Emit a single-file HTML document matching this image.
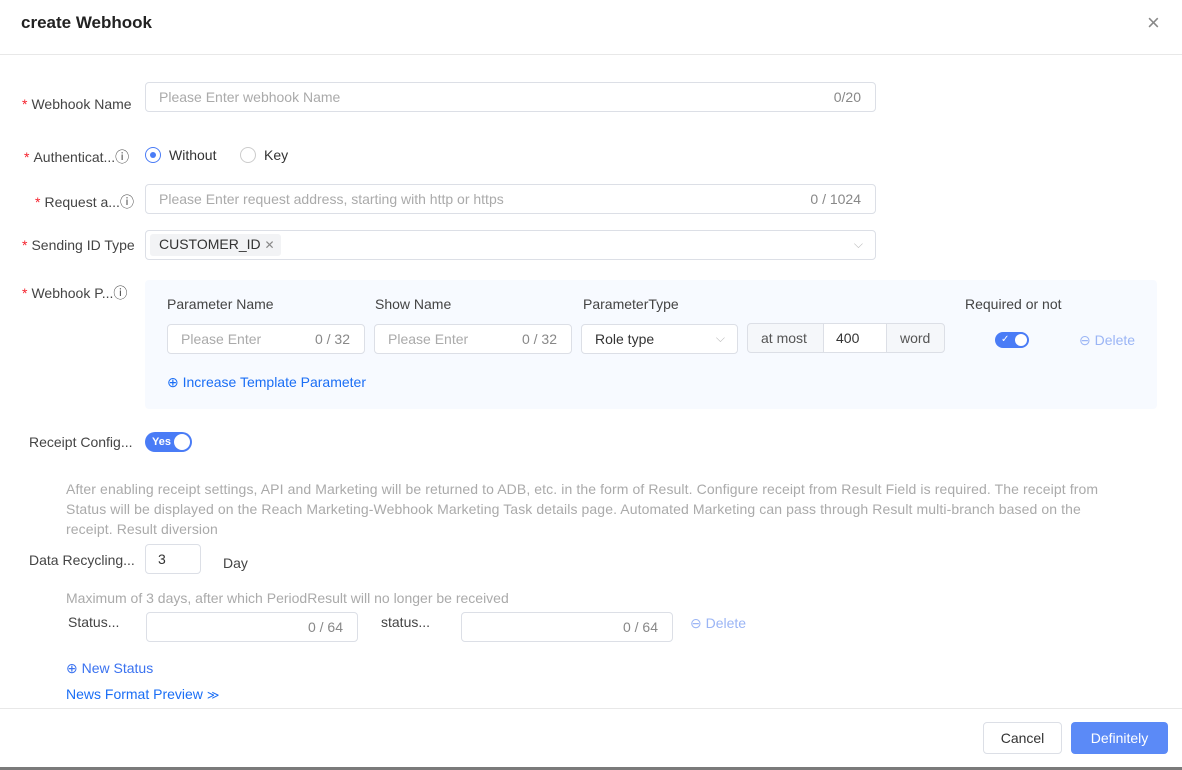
<!DOCTYPE html>
<html><head><meta charset="utf-8"><style>
*{box-sizing:border-box;margin:0;padding:0}
body{width:1182px;height:770px;background:#fff;font-family:"Liberation Sans",sans-serif;font-size:14px;color:#333;position:relative;overflow:hidden}
.a{position:absolute;white-space:nowrap}
.lbl{color:#444;font-size:14px}
.req{color:#f5222d;margin-right:4px}
.inp{position:absolute;border:1px solid #dcdfe6;border-radius:4px;background:#fff;height:30px}
.ph{position:absolute;color:#aaa;top:6px;font-size:14px;white-space:nowrap}
.cnt{position:absolute;right:14px;top:6px;color:#888;font-size:14px}
.blue{color:#1a6ef5}
.lb{color:#9bb5f5}
.gray{color:#aaa}
</style></head><body>
<div class="a" style="left:21px;top:13px;font-size:17px;font-weight:bold;color:#222">create Webhook</div>
<div class="a" style="left:1147px;top:10px;font-size:22px;color:#888">×</div>
<div class="a" style="left:0;top:54px;width:1182px;height:1px;background:#e8e8e8"></div>

<div class="a lbl" style="left:22px;top:96px"><span class="req">*</span>Webhook Name</div>
<div class="inp" style="left:145px;top:82px;width:731px"><span class="ph" style="left:13px">Please Enter webhook Name</span><span class="cnt">0/20</span></div>

<div class="a lbl" style="left:24px;top:147px"><span class="req">*</span>Authenticat...ⓘ</div>
<div class="a" style="left:145px;top:147px;width:16px;height:16px;border:1px solid #4a7cf6;border-radius:50%"><div style="position:absolute;left:4px;top:4px;width:6px;height:6px;border-radius:50%;background:#4a7cf6"></div></div>
<div class="a" style="left:169px;top:147px">Without</div>
<div class="a" style="left:240px;top:147px;width:16px;height:16px;border:1px solid #ccc;border-radius:50%"></div>
<div class="a" style="left:264px;top:147px">Key</div>

<div class="a lbl" style="left:35px;top:192px"><span class="req">*</span>Request a...ⓘ</div>
<div class="inp" style="left:145px;top:184px;width:731px"><span class="ph" style="left:13px">Please Enter request address, starting with http or https</span><span class="cnt">0 / 1024</span></div>

<div class="a lbl" style="left:22px;top:237px"><span class="req">*</span>Sending ID Type</div>
<div class="inp" style="left:145px;top:230px;width:731px"><div class="a" style="left:4px;top:3px;height:22px;background:#f2f3f5;border-radius:3px;padding:2px 6px 0 9px;color:#333">CUSTOMER_ID <span style="color:#888;font-size:12px">✕</span></div><span class="a" style="right:12px;top:6px;color:#bbb;font-size:12px">⌵</span></div>

<div class="a lbl" style="left:22px;top:283px"><span class="req">*</span>Webhook P...ⓘ</div>
<div class="a" style="left:145px;top:280px;width:1012px;height:129px;background:#f7faff;border-radius:4px"></div>
<div class="a lbl" style="left:167px;top:296px">Parameter Name</div>
<div class="a lbl" style="left:375px;top:296px">Show Name</div>
<div class="a lbl" style="left:583px;top:296px">ParameterType</div>
<div class="a lbl" style="left:965px;top:296px">Required or not</div>
<div class="inp" style="left:167px;top:324px;width:198px"><span class="ph" style="left:13px">Please Enter</span><span class="cnt">0 / 32</span></div>
<div class="inp" style="left:374px;top:324px;width:198px"><span class="ph" style="left:13px">Please Enter</span><span class="cnt">0 / 32</span></div>
<div class="inp" style="left:581px;top:324px;width:157px"><span class="a" style="left:13px;top:6px;color:#333">Role type</span><span class="a" style="right:12px;top:6px;color:#bbb;font-size:12px">⌵</span></div>
<div class="inp" style="left:747px;top:323px;width:198px;background:#f5f7fa;overflow:hidden"><span class="a" style="left:13px;top:6px;color:#555">at most</span><div class="a" style="left:75px;top:0;width:64px;height:30px;background:#fff;border-left:1px solid #dcdfe6;border-right:1px solid #dcdfe6"><span class="a" style="left:12px;top:6px;color:#333">400</span></div><span class="a" style="left:152px;top:6px;color:#555">word</span></div>
<div class="a" style="left:995px;top:332px;width:34px;height:16px;border-radius:8px;background:#4a7cf6"><span class="a" style="left:6px;top:1px;color:#fff;font-size:10px;line-height:14px">✓</span><div class="a" style="right:2px;top:2px;width:12px;height:12px;border-radius:50%;background:#fff"></div></div>
<div class="a lb" style="left:1079px;top:332px">⊖ Delete</div>
<div class="a blue" style="left:167px;top:374px">⊕ Increase Template Parameter</div>

<div class="a lbl" style="left:29px;top:434px">Receipt Config...</div>
<div class="a" style="left:145px;top:432px;width:47px;height:20px;border-radius:10px;background:#4a7cf6"><span class="a" style="left:7px;top:0;color:#fff;font-size:11px;font-weight:bold;line-height:20px">Yes</span><div class="a" style="right:2px;top:2px;width:16px;height:16px;border-radius:50%;background:#fff"></div></div>
<div class="a gray" style="left:66px;top:479px;line-height:20px;font-size:14px;letter-spacing:0.1px">After enabling receipt settings, API and Marketing will be returned to ADB, etc. in the form of Result. Configure receipt from Result Field is required. The receipt from<br>Status will be displayed on the Reach Marketing-Webhook Marketing Task details page. Automated Marketing can pass through Result multi-branch based on the<br>receipt. Result diversion</div>

<div class="a lbl" style="left:29px;top:552px">Data Recycling...</div>
<div class="inp" style="left:145px;top:544px;width:56px"><span class="a" style="left:12px;top:6px;color:#333">3</span></div>
<div class="a lbl" style="left:223px;top:555px">Day</div>
<div class="a gray" style="left:66px;top:590px">Maximum of 3 days, after which PeriodResult will no longer be received</div>
<div class="a lbl" style="left:68px;top:614px">Status...</div>
<div class="inp" style="left:146px;top:612px;width:212px"><span class="cnt">0 / 64</span></div>
<div class="a lbl" style="left:381px;top:614px">status...</div>
<div class="inp" style="left:461px;top:612px;width:212px"><span class="cnt">0 / 64</span></div>
<div class="a lb" style="left:690px;top:615px">⊖ Delete</div>
<div class="a" style="left:66px;top:660px;color:#3a72f0">⊕ New Status</div>
<div class="a" style="left:66px;top:686px;color:#1a6ef5">News Format Preview <span style="font-size:12px">≫</span></div>

<div class="a" style="left:0;top:708px;width:1182px;height:1px;background:#e8e8e8"></div>
<div class="a" style="left:983px;top:722px;width:79px;height:32px;border:1px solid #dcdfe6;border-radius:4px;text-align:center;line-height:30px;color:#333">Cancel</div>
<div class="a" style="left:1071px;top:722px;width:97px;height:32px;border-radius:4px;background:#5b8af7;text-align:center;line-height:32px;color:#fff">Definitely</div>
<div class="a" style="left:0;top:767px;width:1182px;height:3px;background:#7a7a7a"></div>
</body></html>
